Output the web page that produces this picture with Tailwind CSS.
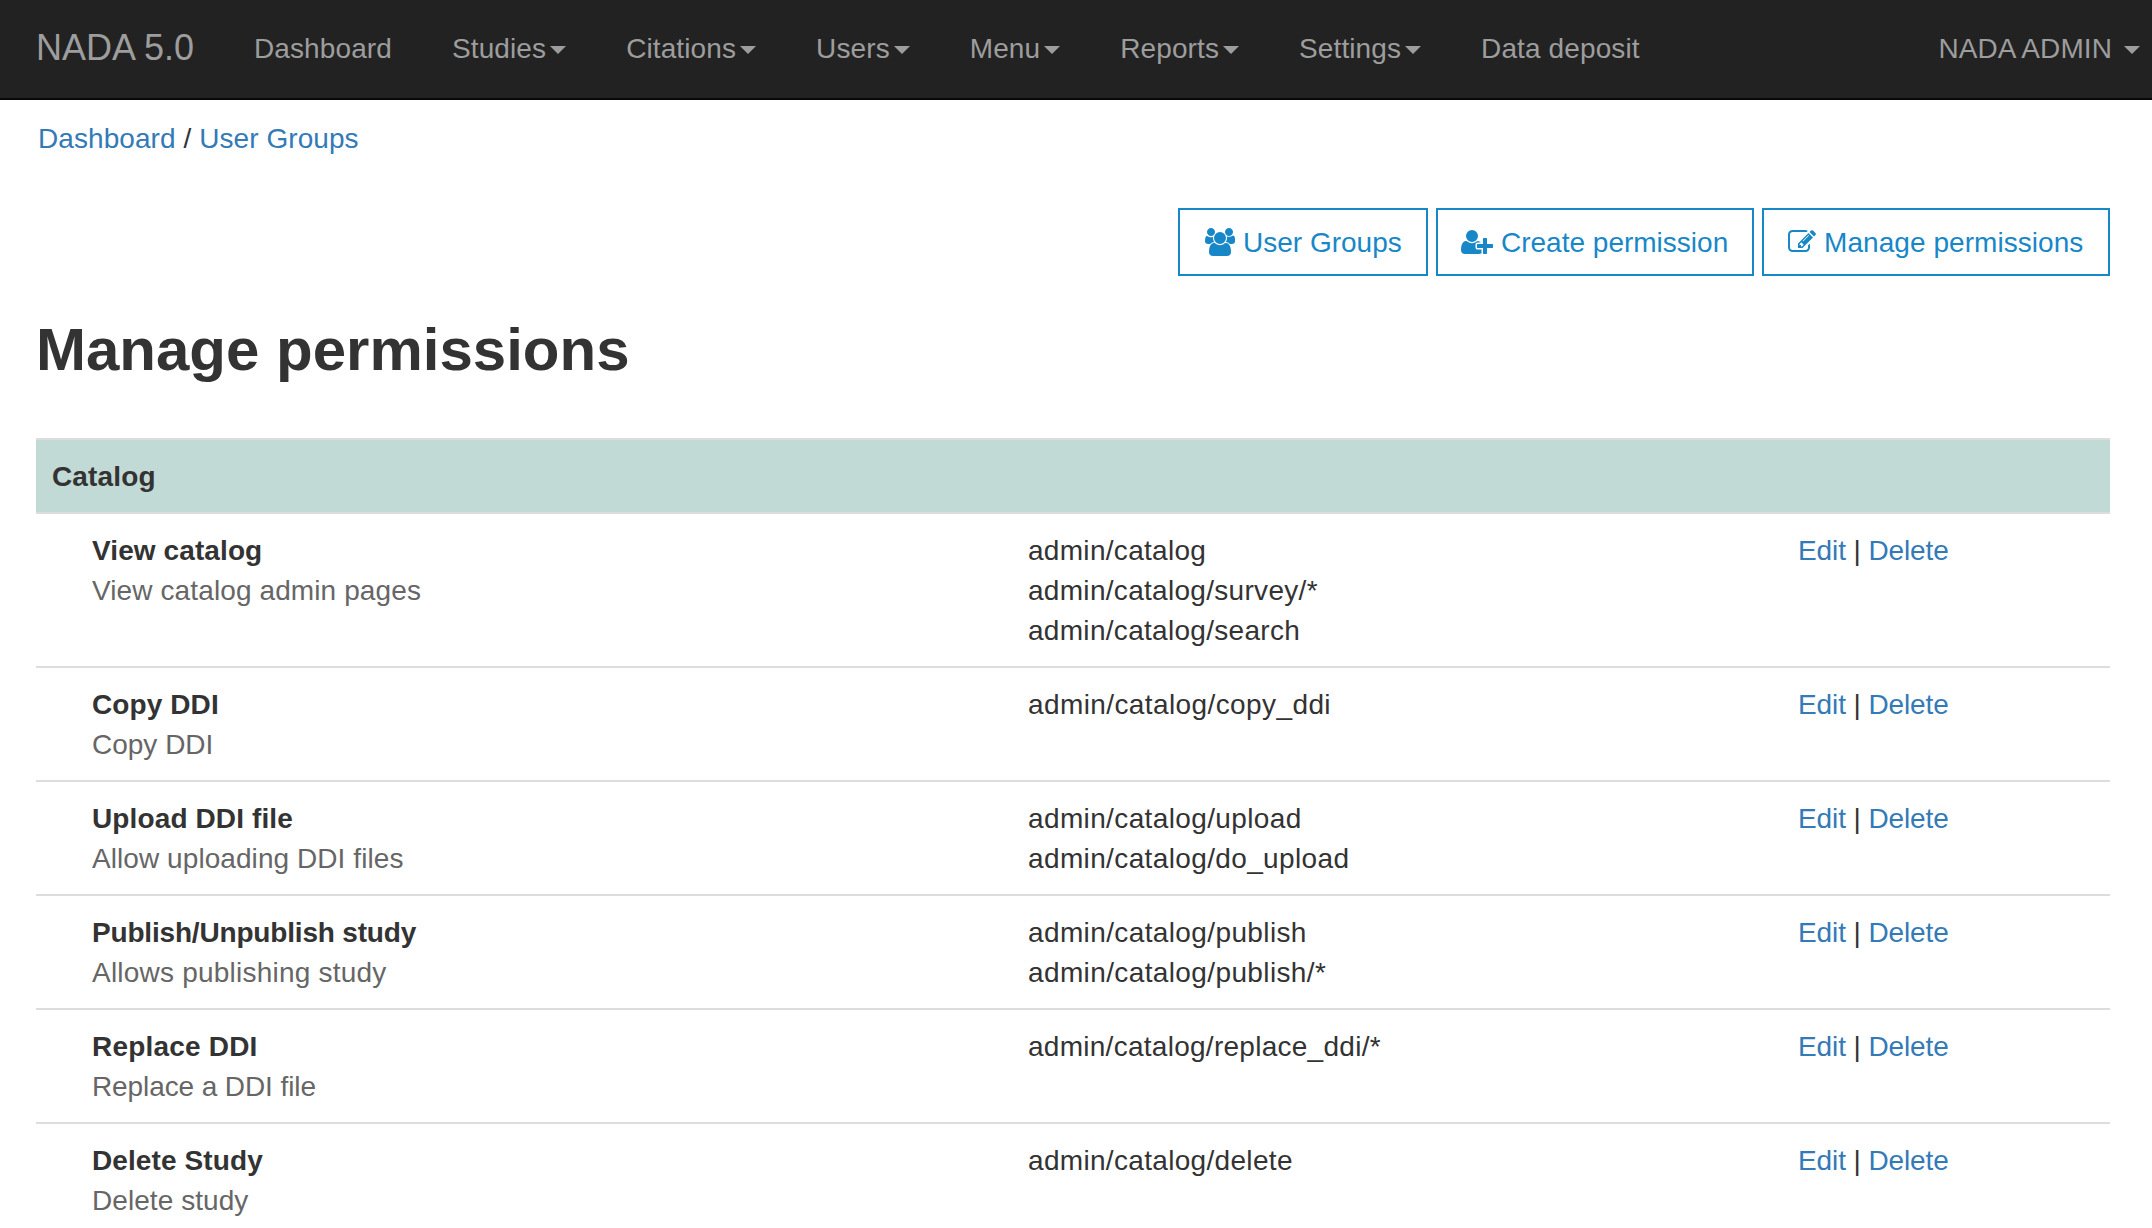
<!DOCTYPE html>
<html lang="en">
<head>
<meta charset="utf-8">
<title>Manage permissions</title>
<script src="https://cdn.jsdelivr.net/npm/@tailwindcss/browser@4"></script>
</head>
<body class="h-[1228px] overflow-hidden bg-white font-['Liberation_Sans',Arial,sans-serif] text-[28px] leading-[40px] text-[#333]">
<nav class="flex h-[100px] items-start justify-between border-b-2 border-[#080808] bg-[#222] text-[#9d9d9d] whitespace-nowrap">
  <div class="flex">
    <a class="w-[224px] pl-9 pt-7 text-[36px]">NADA 5.0</a>
    <div class="flex pt-[29px] tracking-[0.11px]">
      <a class="px-[30px]">Dashboard</a>
      <a class="flex items-center gap-1 px-[30px]">Studies<i class="mt-0.5 border-x-8 border-t-8 border-x-transparent"></i></a>
      <a class="flex items-center gap-1 px-[30px]">Citations<i class="mt-0.5 border-x-8 border-t-8 border-x-transparent"></i></a>
      <a class="flex items-center gap-1 px-[30px]">Users<i class="mt-0.5 border-x-8 border-t-8 border-x-transparent"></i></a>
      <a class="flex items-center gap-1 px-[30px]">Menu<i class="mt-0.5 border-x-8 border-t-8 border-x-transparent"></i></a>
      <a class="flex items-center gap-1 px-[30px]">Reports<i class="mt-0.5 border-x-8 border-t-8 border-x-transparent"></i></a>
      <a class="flex items-center gap-1 px-[30px]">Settings<i class="mt-0.5 border-x-8 border-t-8 border-x-transparent"></i></a>
      <a class="px-[30px]">Data deposit</a>
    </div>
  </div>
  <a class="flex items-center gap-3 pt-[29px] pr-3 tracking-[0.08px]">NADA ADMIN<i class="mt-0.5 border-x-8 border-t-8 border-x-transparent"></i></a>
</nav>
<main class="pl-9 pr-[42px]">
  <div class="pt-[19px] pl-0.5 tracking-[0.07px]"><a class="text-[#337ab7]">Dashboard</a> / <a class="text-[#337ab7]">User Groups</a></div>
  <div class="mt-[49px] flex justify-end gap-2 text-[#1787c8] whitespace-nowrap">
    <a class="flex h-[68px] w-[250px] items-center gap-2 border-2 border-[#1787c8] pl-[25px]">
      <svg class="h-7 w-[30px] shrink-0" viewBox="0 0 1920 1792" fill="currentColor"><path d="M593 896q-162 5-265 128h-134q-82 0-138-40.500t-56-118.500q0-353 124-353 6 0 43.500 21t97.500 42.500 119 21.500q67 0 133-23-5 37-5 66 0 159 90 293zm1071 637q0 120-73 189.500t-194 69.500h-874q-121 0-194-69.500t-73-189.500q0-53 3.500-103.500t14-109 26.500-108.500 43-97.500 62-81 85.500-53.500 111.500-20q10 0 43 21.500t73 48 107 48 135 21.500 135-21.500 107-48 73-48 43-21.500q61 0 111.500 20t85.500 53.500 62 81 43 97.500 26.500 108.500 14 109 3.500 103.500zm-1024-1277q0 106-75 181t-181 75-181-75-75-181 75-181 181-75 181 75 75 181zm704 384q0 159-112.500 271.500t-271.500 112.500-271.500-112.500-112.500-271.500 112.500-271.500 271.500-112.500 271.500 112.500 112.500 271.500zm576 225q0 78-56 118.500t-138 40.500h-134q-103-123-265-128 90-134 90-293 0-29-5-66 66 23 133 23 59 0 119-21.500t97.500-42.500 43.500-21q124 0 124 353zm-128-609q0 106-75 181t-181 75-181-75-75-181 75-181 181-75 181 75 75 181z"/></svg>
      <span class="pt-0.5">User Groups</span></a>
    <a class="flex h-[68px] w-[318px] items-center gap-2 border-2 border-[#1787c8] pl-[23px]">
      <svg class="h-7 w-8 shrink-0" viewBox="0 0 2048 1792" fill="currentColor"><path d="M704 896q-159 0-271.500-112.500t-112.500-271.500 112.500-271.500 271.500-112.500 271.500 112.500 112.500 271.500-112.500 271.500-271.500 112.500zm960 128h352q13 0 22.500 9.500t9.500 22.500v192q0 13-9.500 22.500t-22.500 9.500h-352v352q0 13-9.500 22.500t-22.500 9.500h-192q-13 0-22.500-9.500t-9.500-22.500v-352h-352q-13 0-22.500-9.500t-9.500-22.500v-192q0-13 9.500-22.500t22.500-9.500h352v-352q0-13 9.500-22.500t22.500-9.500h192q13 0 22.500 9.500t9.500 22.500v352zm-736 224q0 52 38 90t90 38h256v238q-68 50-171 50h-874q-121 0-194-69t-73-190q0-53 3.500-103.500t14-109 26.500-108.500 43-97.500 62-81 85.500-53.500 111.500-20q19 0 39 17 79 61 154.500 91.500t164.500 30.500 164.500-30.500 154.500-91.500q20-17 39-17 132 0 217 96h-223q-52 0-90 38t-38 90v192z"/></svg>
      <span class="pt-0.5">Create permission</span></a>
    <a class="flex h-[68px] w-[348px] items-center gap-2 border-2 border-[#1787c8] pl-6">
      <svg class="h-7 w-7 shrink-0" viewBox="0 0 1792 1792" fill="currentColor"><path d="M888 1184l116-116-152-152-116 116v56h96v96h56zm440-720q-16-16-33 1l-350 350q-17 17-1 33t33-1l350-350q17-17 1-33zm80 594v190q0 119-84.500 203.500t-203.500 84.500h-832q-119 0-203.500-84.500t-84.500-203.500v-832q0-119 84.500-203.500t203.500-84.500h832q63 0 117 25 15 7 18 23 3 17-9 29l-49 49q-14 14-32 8-23-6-45-6h-832q-66 0-113 47t-47 113v832q0 66 47 113t113 47h832q66 0 113-47t47-113v-126q0-13 9-22l64-64q15-15 35-7t20 29zm-96-738l288 288-672 672h-288v-288zm444 132l-92 92-288-288 92-92q28-28 68-28t68 28l152 152q28 28 28 68t-28 68z"/></svg>
      <span class="pt-0.5 tracking-[0.06px]">Manage permissions</span></a>
  </div>
  <h1 class="mt-[41px] text-[60px] leading-[66px] font-bold">Manage permissions</h1>
  <div class="mt-[55px]">
    <div class="border-t-2 border-[#ddd] bg-[#c1dad6] px-4 pt-[17px] pb-[15px] font-bold tracking-[0.15px]">Catalog</div>
    <div class="grid grid-cols-[976px_770px_1fr] border-t-2 border-[#ddd] px-4 pt-[17px] pb-[15px] *:first:pl-10">
      <div><b class="tracking-[0.1px]">View catalog</b><p class="tracking-[0.11px] text-[#666]">View catalog admin pages</p></div>
      <div class="tracking-[0.3px]">admin/catalog<br>admin/catalog/survey/*<br>admin/catalog/search</div>
      <div class="tracking-[-0.1px]"><a class="text-[#337ab7]">Edit</a> | <a class="text-[#337ab7]">Delete</a></div>
    </div>
    <div class="grid grid-cols-[976px_770px_1fr] border-t-2 border-[#ddd] px-4 pt-[17px] pb-[15px] *:first:pl-10">
      <div><b class="tracking-[0.1px]">Copy DDI</b><p class="text-[#666]">Copy DDI</p></div>
      <div class="tracking-[0.4px]">admin/catalog/copy_ddi</div>
      <div class="tracking-[-0.1px]"><a class="text-[#337ab7]">Edit</a> | <a class="text-[#337ab7]">Delete</a></div>
    </div>
    <div class="grid grid-cols-[976px_770px_1fr] border-t-2 border-[#ddd] px-4 pt-[17px] pb-[15px] *:first:pl-10">
      <div><b class="tracking-[0.12px]">Upload DDI file</b><p class="tracking-[0.07px] text-[#666]">Allow uploading DDI files</p></div>
      <div class="tracking-[0.37px]">admin/catalog/upload<br>admin/catalog/do_upload</div>
      <div class="tracking-[-0.1px]"><a class="text-[#337ab7]">Edit</a> | <a class="text-[#337ab7]">Delete</a></div>
    </div>
    <div class="grid grid-cols-[976px_770px_1fr] border-t-2 border-[#ddd] px-4 pt-[17px] pb-[15px] *:first:pl-10">
      <div><b class="tracking-[-0.18px]">Publish/Unpublish study</b><p class="tracking-[0.22px] text-[#666]">Allows publishing study</p></div>
      <div class="tracking-[0.38px]">admin/catalog/publish<br>admin/catalog/publish/*</div>
      <div class="tracking-[-0.1px]"><a class="text-[#337ab7]">Edit</a> | <a class="text-[#337ab7]">Delete</a></div>
    </div>
    <div class="grid grid-cols-[976px_770px_1fr] border-t-2 border-[#ddd] px-4 pt-[17px] pb-[15px] *:first:pl-10">
      <div><b class="tracking-[0.2px]">Replace DDI</b><p class="tracking-[-0.1px] text-[#666]">Replace a DDI file</p></div>
      <div class="tracking-[0.27px]">admin/catalog/replace_ddi/*</div>
      <div class="tracking-[-0.1px]"><a class="text-[#337ab7]">Edit</a> | <a class="text-[#337ab7]">Delete</a></div>
    </div>
    <div class="grid grid-cols-[976px_770px_1fr] border-t-2 border-[#ddd] px-4 pt-[17px] pb-[15px] *:first:pl-10">
      <div><b class="tracking-[0.1px]">Delete Study</b><p class="tracking-[0.06px] text-[#666]">Delete study</p></div>
      <div class="tracking-[0.32px]">admin/catalog/delete</div>
      <div class="tracking-[-0.1px]"><a class="text-[#337ab7]">Edit</a> | <a class="text-[#337ab7]">Delete</a></div>
    </div>
  </div>
</main>
</body>
</html>
